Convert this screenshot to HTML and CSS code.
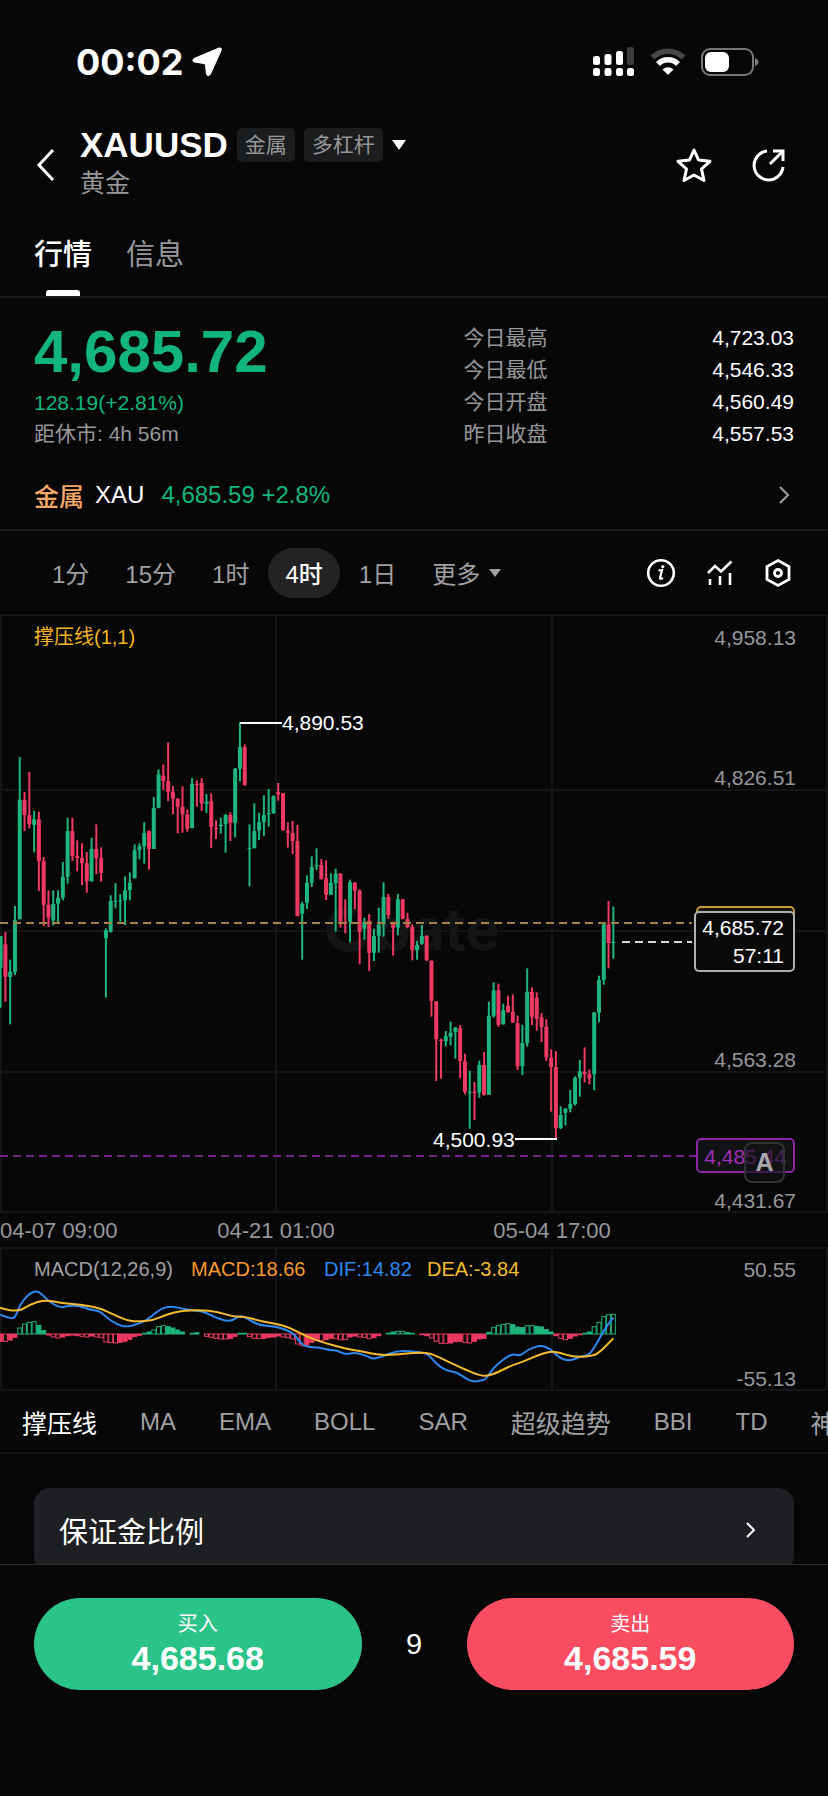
FILE: index.html
```html
<!DOCTYPE html>
<html lang="zh-CN">
<head>
    <meta charset="UTF-8">
    <meta name="viewport" content="width=device-width, initial-scale=1.0">
    <title>XAUUSD 黄金</title>
    <link rel="stylesheet" href="styles.css">
</head>
<body>
    <div class="app">
        <div class="status-bar">
            <div class="status-left">
                <span class="clock">00:02</span>
                <svg width="30" height="30" viewBox="0 0 30 30"><path d="M27 1 L2 11.500 Q-0.500 13.500 2 15 L12 16.500 Q13.500 16.700 13.500 18.500 L14.500 27 Q16 30.500 18.500 27 L29.300 3 Q30 0.500 27 1 Z" fill="#fff" stroke="#fff" stroke-width="1"/></svg>
            </div>
            <div class="status-right">
                <svg width="42" height="30" viewBox="0 0 42 30" fill="#fff">
                    <rect x="0" y="9" width="7" height="9" rx="2.5"/>
                    <rect x="11.5" y="7" width="7" height="11" rx="2.5"/>
                    <rect x="23" y="4" width="7" height="14" rx="2.5"/>
                    <rect x="34" y="0" width="7" height="18" rx="2.5" fill="#3c3c3e"/>
                    <rect x="0" y="21" width="7" height="8" rx="2.5"/>
                    <rect x="11.5" y="21" width="7" height="8" rx="2.5"/>
                    <rect x="23" y="21" width="7" height="8" rx="2.5"/>
                    <rect x="34" y="21" width="7" height="8" rx="2.5"/>
                </svg>
                <svg width="36" height="28" viewBox="0 0 36 28" fill="none" stroke-width="5.5">
                    <path d="M2.500 9.500 A22.500 22.500 0 0 1 33.500 9.500" stroke="#48484a"/>
                    <path d="M8 16 A14 14 0 0 1 28 16" stroke="#fff"/>
                    <path d="M12.500 21.500 Q18 17 23.500 21.500 L18.700 26.300 Q18 27 17.300 26.300 Z" fill="#fff" stroke="none"/>
                </svg>
                <svg width="58" height="28" viewBox="0 0 58 28">
                    <rect x="1" y="1" width="51" height="26" rx="8" fill="none" stroke="#77777a" stroke-width="2"/>
                    <rect x="4" y="4" width="24" height="20" rx="6" fill="#fff"/>
                    <path d="M54 10 Q57.500 11.500 57.500 14 T54 18 Z" fill="#77777a"/>
                </svg>
            </div>
        </div>

        <header class="header">
            <button class="icon-btn" aria-label="返回">
                <svg width="20" height="34" viewBox="0 0 20 34" fill="none" stroke="#fff" stroke-width="3"><path d="M17 2 L3 17 L17 32"/></svg>
            </button>
            <div class="title">
                <div class="title-row">
                    <h1>XAUUSD</h1>
                    <span class="tag">金属</span>
                    <span class="tag">多杠杆</span>
                    <svg width="14" height="10" viewBox="0 0 14 10"><path d="M0 0 H14 L7 10 Z" fill="#fff"/></svg>
                </div>
                <p>黄金</p>
            </div>
            <button class="icon-btn" aria-label="收藏">
                <svg width="36" height="36" viewBox="0 0 36 36" fill="none" stroke="#fff" stroke-width="3" stroke-linejoin="round"><path d="M18 3 L22.500 13 L34 14.300 L25.500 22 L28 33.500 L18 28 L8 33.500 L10.500 22 L2 14.300 L13.500 13 Z"/></svg>
            </button>
            <button class="icon-btn" aria-label="分享">
                <svg width="34" height="34" viewBox="0 0 34 34" fill="none" stroke="#fff" stroke-width="3"><path d="M15 3 A14.500 14.500 0 1 0 31 19"/><path d="M18 16 L30 4"/><path d="M21 3 H31 V13"/></svg>
            </button>
        </header>

        <nav class="tabs">
            <a class="tab active" href="#">行情</a>
            <a class="tab" href="#">信息</a>
        </nav>

        <main class="content">
            <section class="quote">
                <div>
                    <div class="price">4,685.72</div>
                    <div class="change">128.19(+2.81%)</div>
                    <div class="closing">距休市: 4h 56m</div>
                </div>
                <dl class="stats">
                    <dt>今日最高</dt><dd>4,723.03</dd>
                    <dt>今日最低</dt><dd>4,546.33</dd>
                    <dt>今日开盘</dt><dd>4,560.49</dd>
                    <dt>昨日收盘</dt><dd>4,557.53</dd>
                </dl>
            </section>

            <a class="related" href="#">
                <span class="related-type">金属</span>
                <span>XAU</span>
                <span class="related-price">4,685.59 +2.8%</span>
                <svg width="10" height="18" viewBox="0 0 10 18" fill="none" stroke="#a0a0a3" stroke-width="2"><path d="M1 1 L9 9 L1 17"/></svg>
            </a>

            <div class="periods">
                <button>1分</button>
                <button>15分</button>
                <button>1时</button>
                <button class="active">4时</button>
                <button>1日</button>
                <button>更多 <svg width="12" height="8" viewBox="0 0 12 8"><path d="M0 0 H12 L6 8 Z" fill="#a0a0a3"/></svg></button>
                <div class="tools">
                    <button aria-label="说明">
                        <svg width="30" height="30" viewBox="0 0 30 30" fill="none" stroke="#fff"><circle cx="15" cy="15" r="12.800" stroke-width="2.600"/><path d="M12.500 12.500 L16 12 L14 20 Q13.800 21.800 17 20" stroke-width="2.200"/><circle cx="16.800" cy="8.600" r="1.600" fill="#fff" stroke="none"/></svg>
                    </button>
                    <button aria-label="指标">
                        <svg width="26" height="26" viewBox="0 0 26 26" fill="none" stroke="#fff" stroke-width="2.600"><path d="M1 13 L8 6 L14 11.500 L24.500 1.500"/><path d="M3 19 V25 M13 16 V25 M23 13 V25"/></svg>
                    </button>
                    <button aria-label="设置">
                        <svg width="28" height="30" viewBox="0 0 28 30" fill="none" stroke="#fff" stroke-width="2.800"><path d="M14 2.500 L25 8.500 V21.500 L14 27.500 L3 21.500 V8.500 Z"/><circle cx="14" cy="15" r="3.500"/></svg>
                    </button>
                </div>
            </div>

            <div class="chart">
                <svg id="klineChart" viewBox="0 0 828 599">
                    <g class="grid">
                        <path d="M0 1 H828 M0 176 H828 M0 317 H828 M0 458 H828 M0 598 H828"/>
                        <path d="M1 0 V599 M276 0 V599 M552 0 V599 M827 0 V599"/>
                    </g>
                    <g class="watermark">
                        <path d="M356 299 A18 18 0 1 0 364 325"/>
                        <text x="374" y="336">bate</text>
                    </g>
                    <g id="candles"></g>
                    <path class="line-high" d="M0 309 H692"/>
                    <path class="line-last" d="M622 328 H692"/>
                    <path class="line-low" d="M0 542 H697"/>

                    <path class="mark" d="M240 109 H282 M515 525 H557"/>
                    <text class="mark-text" x="282" y="116">4,890.53</text>
                    <text class="mark-text" x="433" y="533">4,500.93</text>
                    <text class="legend" x="34" y="30">撑压线(1,1)</text>

                    <text class="axis" x="796" y="31">4,958.13</text>
                    <text class="axis" x="796" y="171">4,826.51</text>
                    <text class="axis" x="796" y="453">4,563.28</text>
                    <text class="axis" x="796" y="594">4,431.67</text>

                    <rect class="box-high" x="697" y="293" width="97" height="33" rx="4"/>
                    <rect class="box-last" x="695" y="298" width="99" height="59" rx="4"/>
                    <text class="box-text" x="784" y="321">4,685.72</text>
                    <text class="box-text" x="784" y="349">57:11</text>
                    <rect class="box-low" x="697" y="525" width="97" height="33" rx="4"/>
                    <text class="low-text" x="786" y="550">4,485.44</text>
                </svg>
                <button class="auto-btn">A</button>
            </div>

            <svg class="times" viewBox="0 0 828 34">
                <text x="0" y="25">04-07 09:00</text>
                <text x="276" y="25" text-anchor="middle">04-21 01:00</text>
                <text x="552" y="25" text-anchor="middle">05-04 17:00</text>
            </svg>

            <svg class="macd" viewBox="0 0 828 144">
                <g class="grid">
                    <path d="M0 1 H828 M0 143 H828"/>
                    <path d="M1 0 V144 M276 0 V144 M552 0 V144 M827 0 V144"/>
                </g>
                <g id="bars"></g>
                <path id="dif" class="dif"/>
                <path id="dea" class="dea"/>
                <text x="34" y="29" fill="#a0a0a3">MACD(12,26,9)</text>
                <text x="191" y="29" fill="#f7982d">MACD:18.66</text>
                <text x="324" y="29" fill="#2f87f0">DIF:14.82</text>
                <text x="427" y="29" fill="#f3bb2f">DEA:-3.84</text>
                <text class="axis" x="796" y="30">50.55</text>
                <text class="axis" x="796" y="139">-55.13</text>
            </svg>

            <nav class="indicators">
                <a class="zh active" href="#">撑压线</a>
                <a href="#">MA</a>
                <a href="#">EMA</a>
                <a href="#">BOLL</a>
                <a href="#">SAR</a>
                <a class="zh" href="#">超级趋势</a>
                <a href="#">BBI</a>
                <a href="#">TD</a>
                <a class="zh" href="#">神奇九转</a>
            </nav>

            <a class="margin-card" href="#">
                <span>保证金比例</span>
                <svg width="10" height="16" viewBox="0 0 10 16" fill="none" stroke="#fff" stroke-width="2"><path d="M1 1 L8 8 L1 15"/></svg>
            </a>
        </main>

        <footer class="trade">
            <button class="buy"><span>买入</span><b>4,685.68</b></button>
            <span class="spread">9</span>
            <button class="sell"><span>卖出</span><b>4,685.59</b></button>
        </footer>
    </div>
    <script src="chart.js"></script>
</body>
</html>
```

FILE: styles.css
```css
* {
    box-sizing: border-box;
}

body {
    margin: 0;
    background-color: #070708;
    color: #fff;
    font-family: "Liberation Sans", "Noto Sans CJK SC", sans-serif;
}

button {
    border: none;
    padding: 0;
    background: none;
    color: inherit;
    font-family: inherit;
    cursor: pointer;
}

a {
    color: inherit;
    text-decoration: none;
}

svg {
    display: block;
}

.app {
    display: flex;
    flex-direction: column;
    height: 100vh;
    overflow: hidden;
}

/* status bar */
.status-bar {
    display: flex;
    justify-content: space-between;
    padding: 40px 69px 0 76px;
    height: 123px;
}

.status-left,
.status-right {
    display: flex;
    align-items: center;
    height: 44px;
}

.status-left {
    gap: 8px;
}

.status-right {
    gap: 15px;
}

.clock {
    font-family: Inter, sans-serif;
    font-size: 36px;
    font-weight: 700;
}

/* header */
.header {
    display: flex;
    align-items: center;
    gap: 40px;
    padding: 0 42px 0 36px;
    height: 84px;
}

.icon-btn {
    flex: none;
}

.title {
    flex: 1;
    margin-left: -16px;
    padding-bottom: 6px;
}

.title-row {
    display: flex;
    align-items: center;
    gap: 9px;
}

.title h1 {
    margin: 0;
    font-size: 35px;
    line-height: 42px;
    font-weight: 700;
}

.title p {
    margin: 0;
    font-size: 25px;
    line-height: 34px;
    color: #97979a;
}

.tag {
    padding: 0 8px;
    border-radius: 5px;
    background-color: #1b1c1e;
    color: #97979a;
    font-size: 21px;
    line-height: 34px;
}

/* tabs */
.tabs {
    display: flex;
    gap: 34px;
    flex: none;
    padding: 0 34px;
    height: 91px;
    border-bottom: 2px solid #19191b;
}

.tab {
    position: relative;
    padding-top: 26px;
    font-size: 29px;
    line-height: 44px;
    color: #97979a;
}

.tab.active {
    color: #fff;
    font-weight: 500;
}

.tab.active::after {
    content: "";
    position: absolute;
    left: 12px;
    right: 12px;
    bottom: 0;
    height: 6px;
    border-radius: 3px 3px 0 0;
    background-color: #fff;
}

/* quote */
.content {
    flex: 1;
    min-height: 0;
    overflow: hidden;
}

.quote {
    display: grid;
    grid-template-columns: 13fr 10fr;
    padding: 24px 34px 0;
}

.price {
    margin-bottom: 5px;
    font-size: 60px;
    font-weight: 700;
    line-height: 60px;
    color: #12b67c;
}

.change,
.closing {
    font-size: 21px;
    line-height: 31px;
}

.change {
    color: #12b67c;
}

.closing {
    color: #97979a;
}

.stats {
    display: grid;
    grid-template-columns: 1fr auto;
    margin: 0;
    font-size: 21px;
    line-height: 32px;
}

.stats dt {
    color: #97979a;
}

.stats dd {
    margin: 0;
}

.related {
    display: flex;
    align-items: center;
    gap: 11px;
    margin-top: 11px;
    padding: 0 39px 0 34px;
    height: 70px;
    border-bottom: 2px solid #19191b;
    font-size: 24px;
}

.related-type {
    color: #f4a968;
    font-size: 25px;
    font-weight: 500;
}

.related-price {
    flex: 1;
    margin-left: 6px;
    color: #12b67c;
}

/* periods */
.periods {
    display: flex;
    align-items: center;
    gap: 2px;
    padding: 0 36px 0 35px;
    height: 83px;
    font-size: 24px;
    color: #a0a0a3;
}

.periods button {
    display: flex;
    align-items: center;
    gap: 9px;
    padding: 0 17px;
    height: 50px;
    border-radius: 25px;
    font-size: 24px;
}

.periods .active {
    background-color: #232325;
    color: #fff;
    font-weight: 500;
}

.tools {
    display: flex;
    align-items: center;
    gap: 31px;
    margin-left: auto;
}

.periods .tools button {
    padding: 0;
}

/* charts */
.chart {
    position: relative;
}

.chart svg,
.times,
.macd {
    width: 100%;
    height: auto;
}

.grid path {
    stroke: #151517;
    stroke-width: 2;
}

.watermark path {
    fill: none;
    stroke: #121416;
    stroke-width: 9;
}

.watermark text {
    fill: #121416;
    font-family: Inter, sans-serif;
    font-size: 58px;
    font-weight: 700;
}

.up {
    fill: #1fb57f;
    stroke: #1fb57f;
}

.down {
    fill: #ee3a62;
    stroke: #ee3a62;
}

.hollow {
    fill: #070708;
}

.line-high,
.line-last,
.line-low {
    stroke-width: 2;
    stroke-dasharray: 8 5;
}

.line-high {
    stroke: #a38244;
}

.line-last {
    stroke: #d8d8d8;
}

.line-low {
    stroke: #78228c;
}

.mark {
    stroke: #fff;
    stroke-width: 2;
}

.mark-text,
.box-text,
.low-text,
.axis {
    font-size: 21px;
}

.mark-text,
.box-text {
    fill: #fff;
}

.legend {
    fill: #f3b51f;
    font-size: 20px;
}

.axis,
.box-text,
.low-text {
    text-anchor: end;
}

.axis {
    fill: #97979a;
}

.box-high {
    fill: #1a160f;
    stroke: #c79a3e;
    stroke-width: 2;
}

.box-last {
    fill: #0a0a0a;
    stroke: #b0b0b0;
    stroke-width: 2;
}

.box-low {
    fill: #121214;
    stroke: #8c27a3;
    stroke-width: 2;
}

.low-text {
    fill: #a02fba;
}

.auto-btn {
    position: absolute;
    right: 43px;
    bottom: 30px;
    width: 41px;
    height: 41px;
    border: 2px solid #323235;
    border-radius: 8px;
    background-color: rgba(18, 18, 20, 0.6);
    color: #a8a8aa;
    font-size: 25px;
    font-weight: 700;
}

.times {
    font-size: 22px;
    fill: #97979a;
}

.macd {
    font-size: 20px;
}

.dif,
.dea {
    fill: none;
    stroke-width: 2;
}

.dif {
    stroke: #2f87f0;
}

.dea {
    stroke: #f3bb2f;
}

/* indicator tabs */
.indicators {
    display: flex;
    align-items: center;
    gap: 43px;
    padding-left: 22px;
    height: 63px;
    overflow: hidden;
    white-space: nowrap;
    border-bottom: 2px solid #131315;
    font-size: 24px;
    color: #a0a0a3;
}

.indicators .zh {
    font-size: 25px;
}

.indicators .active {
    color: #fff;
}

.margin-card {
    display: flex;
    align-items: center;
    justify-content: space-between;
    margin: 34px 34px 0;
    padding: 0 38px 0 25px;
    height: 84px;
    border-radius: 16px;
    background-color: #1e1f22;
    font-size: 29px;
}

/* trade bar */
.trade {
    display: flex;
    align-items: center;
    flex: none;
    padding: 33px 34px 106px;
    border-top: 1px solid #29292b;
}

.trade button {
    display: flex;
    flex: 1;
    flex-direction: column;
    align-items: center;
    justify-content: center;
    height: 92px;
    border-radius: 46px;
    color: #fff;
    font-size: 20px;
    line-height: 28px;
}

.trade b {
    font-size: 34px;
    line-height: 40px;
}

.buy {
    background-color: #2cc388;
}

.sell {
    background-color: #fa4d61;
}

.spread {
    width: 105px;
    text-align: center;
    font-size: 29px;
}
```

FILE: chart.js
```js
// Each candle: [high, bodyTop, bodyBottom, low, up], in thirds of a unit.
// Every block has its own vertical offset.
const blocks = [
    { offset: -9, rows: [
        [975,975,1070,1190,1],[963,1000,1098,1172,0],[1046,1082,1098,1240,1],[885,928,1082,1092,1],
        [438,566,925,925,1],[543,566,612,660,0],[483,612,640,652,0],[600,625,641,724,1],
        [602,625,750,840,0],[738,750,881,945,0],[838,881,920,948,0],[838,878,928,943,1],
        [838,860,878,935,1],[753,797,860,868,1],[620,660,797,818,1],[620,660,735,750,0],
        [688,735,741,781,0],[697,741,757,822,0],[723,757,811,845,0],[680,714,811,812,1],
        [640,714,741,790,0],[709,741,786,812,0],[952,958,982,1160,1],[853,870,962,965,1],
        [816,870,873,892,1],[850,868,871,932,1],[796,838,868,942,1],[784,815,838,868,1],
        [700,718,802,802,1],[697,706,718,745,1],[634,666,706,758,1],[658,660,714,776,0],
        [558,591,714,714,1],[475,490,590,592,1],[460,494,510,537,0],[394,510,542,570,0],
        [525,542,563,610,0],[562,563,587,667,0],[526,587,610,665,0],[595,610,653,662,0],
        [501,518,651,652,1],[508,518,522,587,0],[501,516,577,600,0],[549,572,578,606,1],
        [547,570,648,711,0],[628,650,654,684,0],[620,641,646,668,1],[609,612,640,725,1],
        [604,612,635,690,0],[471,473,635,679,1],[334,408,473,511,1],[400,408,522,524,0],
        [640,711,714,826,1],[577,660,712,712,1],[605,633,658,687,1],[553,612,633,675,1],
        [534,606,610,647,1],[553,556,607,609,1],[516,543,550,569,0],[546,546,658,659,0],
        [634,658,666,710,0],[630,666,690,730,0],[642,690,915,916,0]
    ] },
    { offset: 201, rows: [
        [662,668,698,836,1],[583,605,665,684,1],[526,558,605,618,1],[502,552,556,567,1],
        [534,552,594,596,0],[538,592,641,657,0],[577,605,641,642,1],[563,578,607,752,1],
        [576,578,722,740,0],[655,722,728,757,0],[596,604,722,784,1],[603,605,629,684,0],
        [625,629,752,850,0],[710,722,743,776,1],[699,719,815,870,0],[743,765,815,840,1],
        [680,731,764,815,1],[604,648,730,767,1],[639,648,702,714,0],[722,728,740,824,0],
        [639,655,740,763,1],[654,655,713,715,0],[695,714,738,742,0],[730,738,808,838,0],
        [780,792,808,836,1],[732,765,788,791,1],[763,764,838,840,0],[838,839,960,1007,0],
        [961,961,1075,1200,0],[1073,1076,1080,1193,0],[1050,1065,1081,1096,1],[1022,1055,1067,1093,1],
        [1038,1040,1054,1133,1],[1032,1042,1140,1192,0],[1118,1141,1233,1240,0]
    ] },
    { offset: 801, rows: [
        [569,632,634,743,1],[603,632,636,717,0],[539,552,634,650,1],[513,552,641,644,0],
        [362,404,641,641,1],[304,328,404,410,1],[308,328,432,437,0],[368,388,430,431,1],
        [344,374,392,396,0],[340,392,424,426,0],[404,426,556,567,0],[431,486,556,582,1],
        [262,332,486,497,1],[319,332,407,432,0],[334,350,413,449,0],[396,409,437,483,0],
        [415,437,529,540,0],[505,530,558,692,0],[510,558,742,772,0],[676,702,742,744,1],
        [681,683,695,733,1],[627,669,683,694,1],[586,590,670,673,1],[537,571,590,647,1],
        [499,572,580,604,0],[566,580,592,610,0],[393,395,580,628,1],[284,297,395,424,1],
        [127,130,297,311,1],[60,130,186,262,0],[77,182,186,233,1]
    ] }
];

// MACD histogram heights
const hist = [
    -22,-22,-18,-10,18,30,35,37,26,10,-3,-9,-12,-9,-5,-3,-5,-7,-9,-6,-9,-11,-24,-26,-27,-25,-22,-16,-8,-4,
    2,6,12,22,25,22,18,12,6,0,2,4,0,-7,-10,-13,-15,-15,-14,-7,2,2,-8,-13,-14,-13,-10,-9,-6,-9,
    -11,-15,-30,-35,-33,-25,-20,-20,-17,-13,-14,-17,-17,-9,-6,-9,-10,-14,-11,-5,0,2,6,8,8,4,2,0,-2,-5,
    -12,-22,-28,-28,-27,-23,-22,-26,-27,-22,-15,-13,5,20,25,29,31,28,21,19,25,25,23,21,13,6,-5,-13,-17,-13,
    -6,-2,2,6,22,35,52,58,59
];

const dif = [
    [0,341],[35,355],[48,345],[60,310],[85,280],[107,269],[125,278],[145,300],[180,321],[205,314],[240,314],
    [265,325],[300,330],[320,350],[350,370],[380,378],[410,370],[440,358],[480,325],[510,315],[545,322],
    [570,328],[610,330],[640,347],[690,364],[720,342],[745,355],[780,374],[830,376],[880,395],[900,425],
    [920,438],[960,440],[990,448],[1010,447],[1035,461],[1065,454],[1100,465],[1120,475],[1150,465],
    [1190,450],[1230,450],[1275,456],[1290,465],[1310,490],[1340,510],[1370,513],[1400,535],[1425,543],
    [1440,538],[1455,538],[1480,500],[1520,468],[1540,459],[1560,465],[1585,445],[1620,433],[1640,438],
    [1660,452],[1680,472],[1710,480],[1745,465],[1770,462],[1800,410],[1820,375],[1840,350]
];

const dea = [
    [0,320],[50,336],[90,310],[135,296],[180,306],[240,310],[300,322],[340,340],[380,358],[410,362],
    [460,358],[500,340],[540,330],[600,327],[650,332],[700,347],[740,348],[780,360],[830,369],[870,380],
    [920,407],[970,425],[1040,444],[1090,452],[1140,463],[1200,460],[1240,455],[1290,455],[1340,480],
    [1400,508],[1440,523],[1460,525],[1490,516],[1530,495],[1570,482],[1610,464],[1650,451],[1680,455],
    [1720,468],[1770,466],[1795,458],[1840,412]
];

const step = 4.787;

function addShape(parent, name, attrs) {
    const el = document.createElementNS('http://www.w3.org/2000/svg', name);
    for (const key in attrs) {
        el.setAttribute(key, attrs[key]);
    }
    parent.appendChild(el);
}

// Candles
const candles = document.getElementById('candles');
let index = 0;
blocks.forEach(block => {
    block.rows.forEach(([high, top, bottom, low, up]) => {
        const x = 0.6 + index * step;
        const y = v => (v + block.offset) / 3;
        const cls = up ? 'up' : 'down';
        addShape(candles, 'path', { class: cls, 'stroke-width': 2, d: `M${x} ${y(high)} V${y(low)}` });
        addShape(candles, 'rect', {
            class: cls, 'stroke-width': 0, rx: 0.5,
            x: x - 2, y: y(top), width: 4, height: Math.max(1, y(bottom) - y(top))
        });
        index++;
    });
});

// Histogram, hollow while the bars grow
const bars = document.getElementById('bars');
hist.forEach((value, i) => {
    const x = 0.6 + i * step;
    const height = Math.abs(value) / 3;
    const growing = height > 2 && i > 0 && Math.abs(value) >= Math.abs(hist[i - 1]);
    addShape(bars, 'rect', {
        class: (value >= 0 ? 'up' : 'down') + (growing ? ' hollow' : ''),
        'stroke-width': 1,
        x: x - 2, y: value > 0 ? 87 - height : 87, width: 4, height: height
    });
});

// Smooth curve through the midpoints
function curve(points) {
    const p = points.map(([x, y]) => [x / 3, y / 3 - 46]);
    let d = `M${p[0]}`;
    for (let i = 1; i < p.length - 1; i++) {
        const midX = (p[i][0] + p[i + 1][0]) / 2;
        const midY = (p[i][1] + p[i + 1][1]) / 2;
        d += ` Q${p[i]} ${midX},${midY}`;
    }
    return d + ` L${p[p.length - 1]}`;
}

document.getElementById('dif').setAttribute('d', curve(dif));
document.getElementById('dea').setAttribute('d', curve(dea));
```
